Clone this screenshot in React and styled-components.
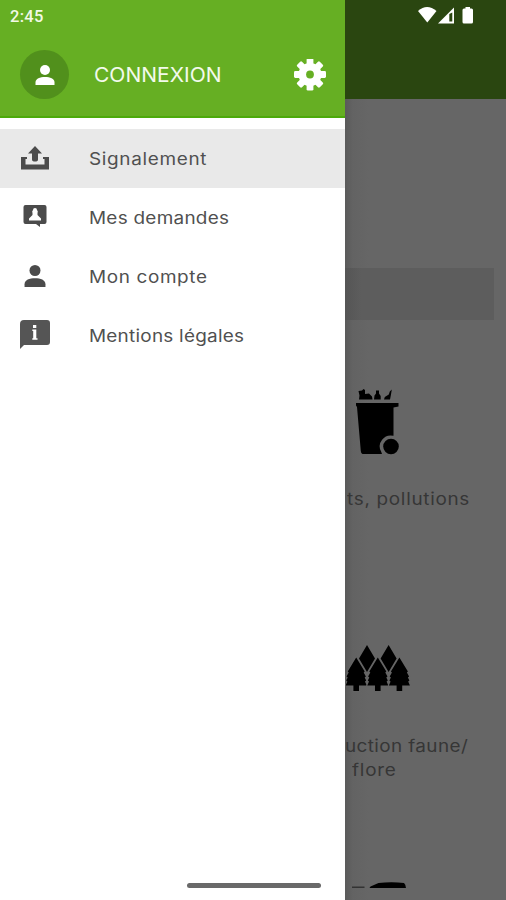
import React from "react";
import styled, { createGlobalStyle } from "styled-components";

const GlobalStyle = createGlobalStyle`
  *, *::before, *::after { box-sizing: border-box; }
  body { margin: 0; font-family: Inter, "Open Sans", sans-serif; }
`;

const Screen = styled.div`
  display: grid;
  grid-template-columns: 345px 161px;
  width: 506px;
  height: 900px;
  overflow: hidden;
  background: #666;
`;

const Drawer = styled.aside`
  display: flex;
  flex-direction: column;
  min-height: 0;
  background: #fff;
`;

const DrawerHeader = styled.header`
  height: 118px;
  background: #66af23;
  border-bottom: 2px solid #4caa0b;
`;

const Clock = styled.div`
  height: 50px;
  padding: 7px 0 0 10px;
  color: #f2f9e6;
  font: 500 16.5px/20px Roboto, sans-serif;
  letter-spacing: 0.3px;
`;

const Account = styled.div`
  display: grid;
  grid-template-columns: 50px 1fr 32px;
  align-items: center;
  height: 49px;
  padding: 0 19px 0 20px;
`;

const Avatar = styled.div`
  display: grid;
  place-items: center;
  width: 49px;
  height: 49px;
  border-radius: 50%;
  background: #51901c;
`;

const WideText = styled.span`
  display: inline-block;
  font-weight: 380;
  letter-spacing: ${(p) => p.$track}px;
  transform: scaleX(${(p) => p.$stretch || 1.12});
  transform-origin: left center;
  white-space: nowrap;
`;

const AccountName = styled.div`
  padding-left: 24px;
  color: #f3faec;
  font-size: 20px;
  line-height: 24px;
`;

const Menu = styled.nav`
  flex: 1;
  padding-top: 11px;
`;

const MenuRow = styled.div`
  display: grid;
  grid-template-columns: 70px 1fr;
  align-items: center;
  height: 59px;
  background: ${(p) => (p.$active ? "#e9e9e9" : "#fff")};
`;

const IconCell = styled.span`
  display: grid;
  place-items: center;
  padding-bottom: 2px;
`;

const MenuLabel = styled.span`
  padding-left: 19px;
  color: #505050;
  font-size: 16.9px;
  line-height: 24px;
`;

const HomeBar = styled.div`
  width: 134px;
  height: 5px;
  margin: 0 0 12px 187px;
  border-radius: 3px;
  background: #696969;
`;

const Page = styled.main`
  display: flex;
  flex-direction: column;
  overflow: hidden;
  background: linear-gradient(90deg, #5a5a5a 0, #636363 8px, #666 24px);
`;

const TopBar = styled.div`
  display: flex;
  justify-content: flex-end;
  flex: 0 0 99px;
  padding: 6px 31px 0 0;
  background: #2a4610;
`;

const SearchField = styled.div`
  flex: 0 0 52px;
  width: 149px;
  margin-top: 169px;
  background: linear-gradient(90deg, #555 0, #5d5d5d 16px, #5d5d5d 100%);
`;

const Category = styled.section`
  flex: 0 0 auto;
  height: ${(p) => p.$height}px;
  padding-top: ${(p) => p.$top}px;
`;

const CategoryLabel = styled.div`
  height: 24px;
  margin-top: ${(p) => p.$gap || 0}px;
  padding-left: ${(p) => p.$indent}px;
  color: #363636;
  font-size: 16.9px;
  line-height: 24px;
`;

const Art = styled.svg`
  display: block;
`;

const PersonIcon = ({ size = 20, color = "#fff" }) => (
  <Art width={size} height={size} viewBox="0 0 20 20" fill={color}>
    <circle cx="10" cy="5" r="5" />
    <path d="M0.500 20v-2.500c0-4 4.500-5.500 9.500-5.500s9.500 1.500 9.500 5.500V20z" />
  </Art>
);

const GearIcon = () => (
  <Art width="32" height="32" viewBox="-16 -15.500 32 32" fill="#fff">
    {[0, 45, 90, 135].map((a) => (
      <rect key={a} x="-3.4" y="-16" width="6.8" height="32" rx="1.300" transform={`rotate(${a})`} />
    ))}
    <circle r="11.5" />
    <circle r="3.9" fill="#66af23" />
  </Art>
);

const UploadIcon = () => (
  <Art width="28" height="24" viewBox="0 0 28 24" fill="#4b4b4b">
    <path d="M0 11h6v2H4.500v5.500h19V13H22v-2h6v12.500H0z" />
    <path d="M14 0l7 7.500h-4V13.500q0 2-3 2t-3-2V7.500H7z" />
  </Art>
);

const RequestIcon = () => (
  <Art width="24" height="23" viewBox="0 0 24 23">
    <path d="M2.500 0h19a2 2 0 012 2v15a2 2 0 01-2 2h-4.500v3l-4-3H2.500a2 2 0 01-2-2V2a2 2 0 012-2z" fill="#4b4b4b" />
    <path d="M6 15.500V13.500l3.500-3.500v-2a2.500 2.500 0 01.5-3a2 2 0 014 0a2.500 2.500 0 01.5 3v2L18 13.500v2z" fill="#fff" />
  </Art>
);

const InfoIcon = () => (
  <Art width="30" height="29" viewBox="0 0 30 29">
    <path d="M4 0h23q3 0 3 3v19q0 3-3 3H4l-4 4V4q0-4 4-4z" fill="#555" />
    <path d="M13 5h3.300v3H13zM12.300 9.500h4v8.700H17.500v1.600h-5.200v-1.600h.9v-7.200h-.9z" fill="#fff" />
  </Art>
);

const StatusIcons = () => (
  <Art width="57" height="18" viewBox="418 6 57 18" fill="#fff">
    <path d="M418 11q9-8 18.500 0L427.300 22.500z" />
    <path fillRule="evenodd" d="M438 23.500L454 7.500v16zM449.300 14l3-1.500v9h-3z" />
    <path d="M464 8.500h1.500V7h4.500v1.500h1.500q1.500 0 1.500 1.500v12q0 1.500-1.500 1.500h-7.500q-1.500 0-1.500-1.500V10q0-1.500 1.500-1.500z" />
  </Art>
);

const BinIcon = () => (
  <Art width="161" height="67" viewBox="345 388 161 67">
    <path d="M356 403h42.500v3.500l-5 1v28.300a11 11 0 00-12.300 16l.8 2.200h-19.500q-1.500-.5-1.700-3L357 407l-1-1.500z" />
    <circle cx="391" cy="446.500" r="7.800" />
    <path d="M359 399.500l.5-4-1-4.500 3.500-.5 1.500-1.500 1.500 1v4l4-.5 3 3 .5 3zM374 399.500l.5-4 1.500-2v-3h3v3l1.700 2.500v3.500zM384 399.500l.8-2.500 4-2.500 1-3 2-2-1 6-.8 4z" />
  </Art>
);

const TreesIcon = () => (
  <Art width="161" height="47" viewBox="345 645 161 47">
    <path d="M367 645l8 13.500-8 13.500-8-13.500zM388.600 645l8 13.500-8 13.500-8-13.500z" />
    {[356.200, 377.800, 399.400].map((x) => (
      <path key={x} transform={`translate(${x} 657.500)`} d="M0 0L8.500 14l-1 1 2.200 4-1.200 1 1.500 3-1.200 1 1.700 4H2.800V33.500h-5.600V28h-7.700l1.700-4-1.200-1 1.500-3-1.200-1 2.200-4-1-1z" stroke="#666" strokeWidth="1.800" paintOrder="stroke" />
    ))}
  </Art>
);

const VehicleIcon = () => (
  <Art width="161" height="7" viewBox="345 882 161 7">
    <path d="M352 886.500h12.500v1.500H352z" fill="#333" />
    <path d="M369.500 888l1-1.500 8-3.500q13-1.500 25.500 0 1.500 1 2 5z" />
  </Art>
);

const items = [
  { label: "Signalement", icon: <UploadIcon />, track: 0.6, active: true },
  { label: "Mes demandes", icon: <RequestIcon />, track: 0.24 },
  { label: "Mon compte", icon: <PersonIcon size={22} color="#4b4b4b" />, track: 0.57 },
  { label: "Mentions légales", icon: <InfoIcon />, track: 0.22 },
];

export default function App() {
  return (
    <Screen>
      <GlobalStyle />
      <Drawer>
        <DrawerHeader>
          <Clock>2:45</Clock>
          <Account>
            <Avatar><PersonIcon size={20} /></Avatar>
            <AccountName><WideText $track={0} $stretch={1.05}>CONNEXION</WideText></AccountName>
            <GearIcon />
          </Account>
        </DrawerHeader>
        <Menu>
          {items.map((item) => (
            <MenuRow key={item.label} $active={item.active}>
              <IconCell>{item.icon}</IconCell>
              <MenuLabel><WideText $track={item.track}>{item.label}</WideText></MenuLabel>
            </MenuRow>
          ))}
        </Menu>
        <HomeBar />
      </Drawer>
      <Page>
        <TopBar><StatusIcons /></TopBar>
        <SearchField />
        <Category $height={257} $top={68}>
          <BinIcon />
          <CategoryLabel $gap={32} $indent={2}><WideText $track={0.62}>ts, pollutions</WideText></CategoryLabel>
        </Category>
        <Category $height={247} $top={68}>
          <TreesIcon />
          <CategoryLabel $gap={42} $indent={0}><WideText $track={0.34}>uction faune/</WideText></CategoryLabel>
          <CategoryLabel $indent={7}><WideText $track={0.7}>flore</WideText></CategoryLabel>
        </Category>
        <Category $height={76} $top={58}>
          <VehicleIcon />
        </Category>
      </Page>
    </Screen>
  );
}
